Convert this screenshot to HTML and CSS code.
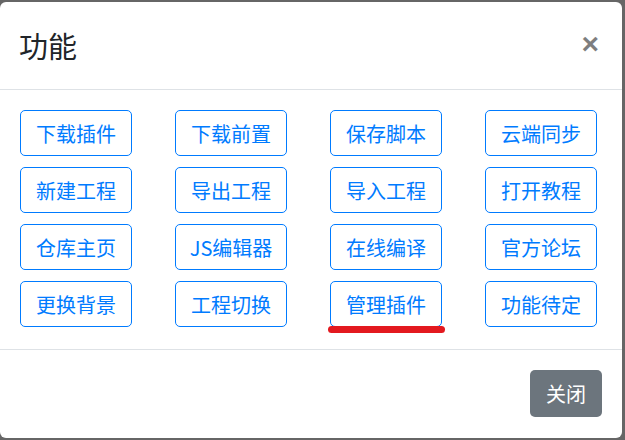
FILE: index.html
```html
<!DOCTYPE html>
<html lang="zh">
<head>
<meta charset="utf-8">
<title>功能</title>
<link rel="stylesheet" href="styles.css">
</head>
<body>
<div class="modal">
  <div class="modal-header">
    <h5 class="modal-title">功能</h5>
    <span class="close">×</span>
  </div>
  <div class="modal-body">
    <div class="grid">
      <button class="btn">下载插件</button>
      <button class="btn">下载前置</button>
      <button class="btn">保存脚本</button>
      <button class="btn">云端同步</button>
      <button class="btn">新建工程</button>
      <button class="btn">导出工程</button>
      <button class="btn">导入工程</button>
      <button class="btn">打开教程</button>
      <button class="btn">仓库主页</button>
      <button class="btn">JS编辑器</button>
      <button class="btn">在线编译</button>
      <button class="btn">官方论坛</button>
      <button class="btn">更换背景</button>
      <button class="btn">工程切换</button>
      <button class="btn marked">管理插件<span class="mark"></span></button>
      <button class="btn">功能待定</button>
    </div>
  </div>
  <div class="modal-footer">
    <button class="btn-close">关闭</button>
  </div>
</div>
</body>
</html>
```
FILE: styles.css
```css
html, body {
  margin: 0;
  padding: 0;
}
body {
  background: #666666;
  width: 625px;
  height: 440px;
  overflow: hidden;
  font-family: "Noto Sans CJK SC", "Noto Sans", sans-serif;
}
.modal {
  margin-top: 2px;
  width: 622px;
  height: 436px;
  background: #ffffff;
  border-radius: 6px;
  display: flex;
  flex-direction: column;
}
.modal-header {
  height: 87px;
  border-bottom: 1px solid #dee2e6;
  display: flex;
  align-items: center;
  justify-content: space-between;
  padding: 0 23px 0 19px;
  box-sizing: content-box;
}
.modal-title {
  margin: 0;
  font-size: 29px;
  font-weight: 400;
  color: #212529;
  line-height: 1;
}
.close {
  font-family: "Liberation Sans", Arial, sans-serif;
  font-size: 30px;
  font-weight: 700;
  color: #000;
  opacity: 0.5;
  line-height: 1;
  margin-top: -4px;
}
.modal-body {
  height: 260px;
  border-bottom: 1px solid #dee2e6;
  padding: 20px 0 0 20px;
  box-sizing: border-box;
}
.grid {
  display: grid;
  grid-template-columns: repeat(4, 112px);
  grid-auto-rows: 46px;
  column-gap: 43px;
  row-gap: 11px;
}
.btn {
  font-family: inherit;
  font-size: 20px;
  color: #007bff;
  background: #fff;
  border: 1px solid #007bff;
  border-radius: 5px;
  padding: 0;
  display: flex;
  align-items: center;
  justify-content: center;
}
.marked {
  position: relative;
}
.mark {
  position: absolute;
  left: -3px;
  right: -4px;
  bottom: -7px;
  height: 7px;
  background: #e3191f;
  border-radius: 4px;
}
.modal-footer {
  flex: 1;
  display: flex;
  justify-content: flex-end;
  align-items: flex-start;
  padding: 20px 20px 0 0;
}
.btn-close {
  width: 72px;
  height: 47px;
  background: #6c757d;
  color: #fff;
  border: none;
  border-radius: 5px;
  font-family: inherit;
  font-size: 20px;
  padding: 0;
}
```
